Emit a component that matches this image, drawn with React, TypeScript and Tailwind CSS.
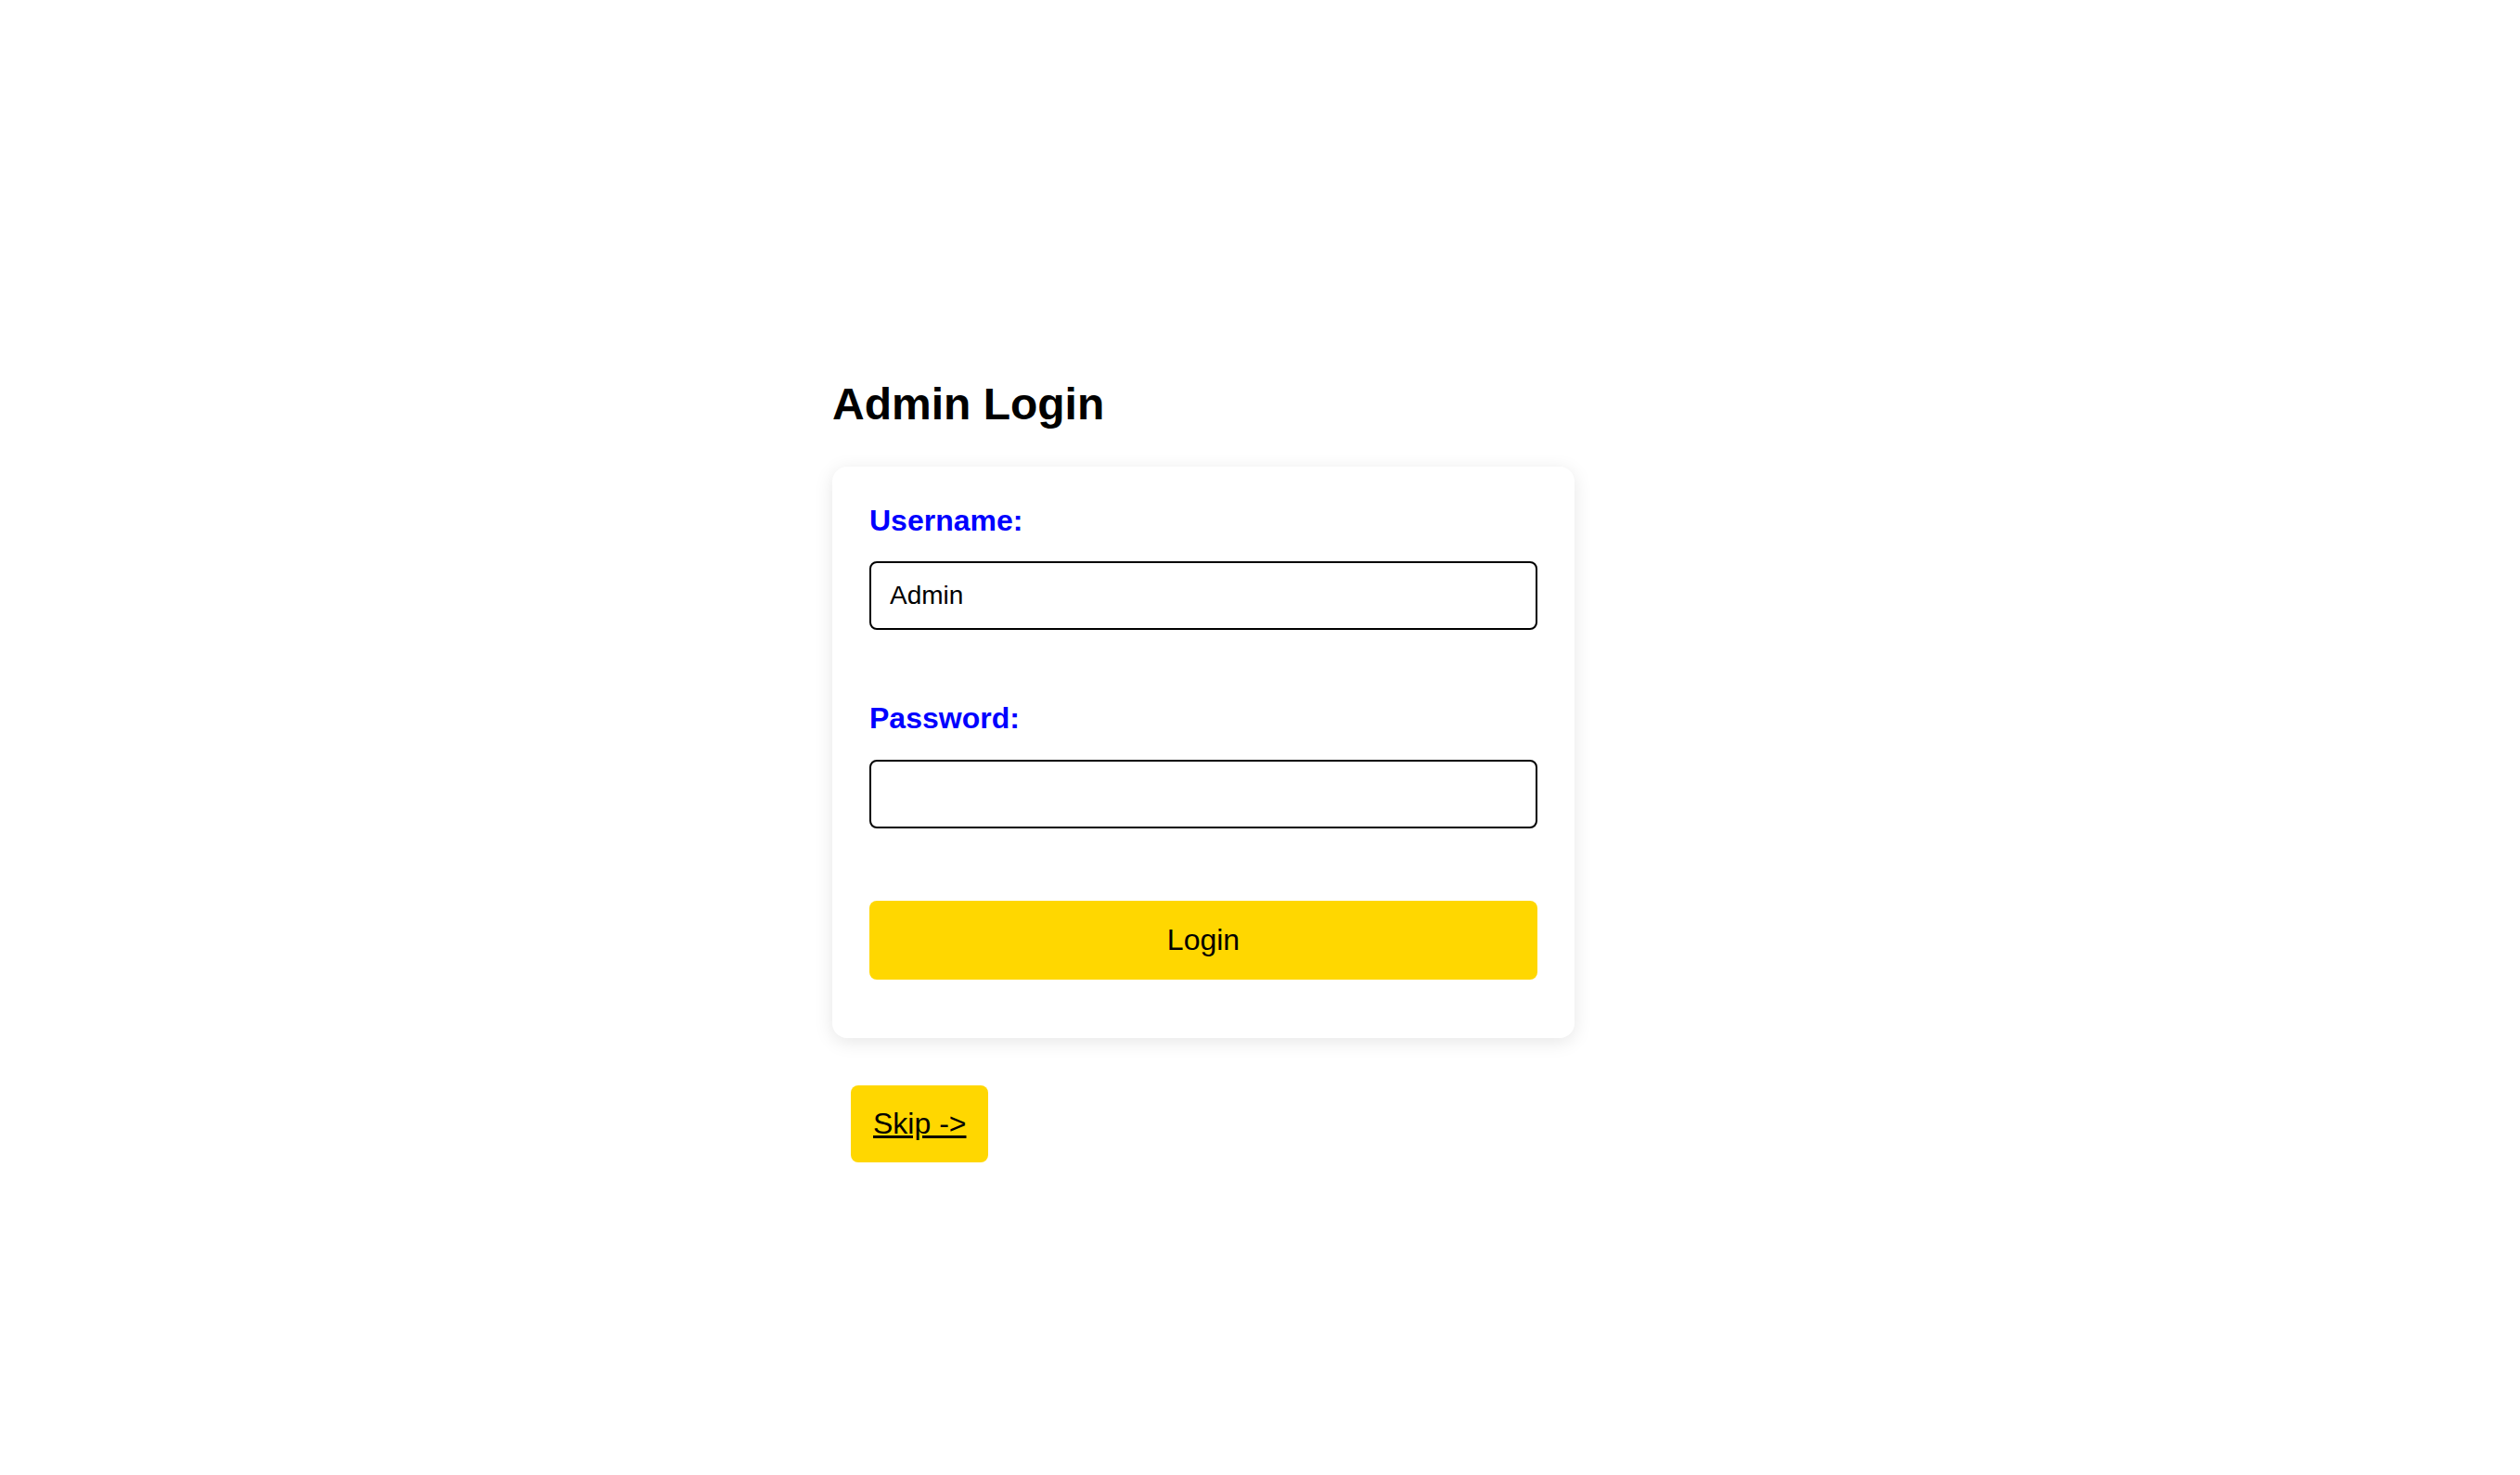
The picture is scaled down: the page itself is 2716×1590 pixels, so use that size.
import { useState } from "react";

const font = { fontFamily: '"Liberation Sans", Arial, sans-serif' };

export default function App() {
  const [username, setUsername] = useState("Admin");
  const [password, setPassword] = useState("");

  return (
    <div className="min-h-screen bg-white text-black" style={font}>
      <div className="w-[800px] ml-[897px] pt-[408px]">
        <h2 className="text-[48px] font-bold leading-[55px] mb-[40px]">Admin Login</h2>

        {/* Card */}
        <div className="rounded-2xl bg-white px-[40px] pt-[40px] pb-[63px] shadow-[0_4px_20px_rgba(0,0,0,0.1)]">
          <label className="block text-[32px] font-bold leading-[37px] text-[#0000ff] mb-[25px]">Username:</label>
          <input value={username} onChange={e => setUsername(e.target.value)}
            className="block w-full rounded-lg border-2 border-black bg-white px-[20px] py-[19px] text-[28px] leading-[32px] text-black outline-none mb-[77px]" />

          <label className="block text-[32px] font-bold leading-[37px] text-[#0000ff] mb-[26px]">Password:</label>
          <input type="password" value={password} onChange={e => setPassword(e.target.value)}
            className="block w-full rounded-lg border-2 border-black bg-white px-[20px] py-[19px] text-[28px] leading-[32px] text-black outline-none mb-[78px]" />

          <button className="block w-full rounded-lg bg-[#ffd700] py-[24px] text-[32px] leading-[37px] text-black">Login</button>
        </div>

        <a href="#" className="mt-[51px] ml-[20px] inline-block rounded-lg bg-[#ffd700] px-[24px] py-[23px] text-[32px] leading-[37px] text-black underline">
          Skip -&gt;
        </a>
      </div>
    </div>
  );
}
